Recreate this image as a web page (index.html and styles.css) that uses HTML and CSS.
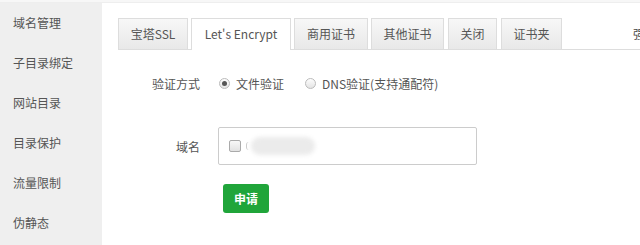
FILE: index.html
```html
<!DOCTYPE html>
<html lang="zh-CN">
<head>
<meta charset="utf-8">
<link rel="stylesheet" href="styles.css">
</head>
<body>
<div class="topstrip"></div>
<div class="page">
  <nav class="sidebar">
    <div class="nav-item">域名管理</div>
    <div class="nav-item">子目录绑定</div>
    <div class="nav-item">网站目录</div>
    <div class="nav-item">目录保护</div>
    <div class="nav-item">流量限制</div>
    <div class="nav-item">伪静态</div>
  </nav>
  <main class="main">
    <div class="tabbar">
      <div class="tab t1">宝塔SSL</div>
      <div class="tab t2 active">Let's Encrypt</div>
      <div class="tab t3">商用证书</div>
      <div class="tab t4">其他证书</div>
      <div class="tab t5">关闭</div>
      <div class="tab t6">证书夹</div>
      <div class="tab-extra">强</div>
    </div>
    <div class="form">
      <div class="row row-verify">
        <div class="label">验证方式</div>
        <label class="radio"><span class="radio-dot checked"></span>文件验证</label>
        <label class="radio"><span class="radio-dot"></span>DNS验证(支持通配符)</label>
      </div>
      <div class="row row-domain">
        <div class="label">域名</div>
        <div class="domain-box">
          <span class="checkbox"></span>
          <span class="paren"></span>
          <span class="blurred"></span>
        </div>
      </div>
      <div class="row row-btn">
        <button class="btn">申请</button>
      </div>
    </div>
  </main>
</div>
</body>
</html>
```

FILE: styles.css
```css
* { box-sizing: border-box; }
html, body { margin: 0; padding: 0; }
body {
  width: 640px;
  height: 245px;
  overflow: hidden;
  background: #fff;
  font-family: "Noto Sans CJK SC", "Noto Sans", sans-serif;
  font-size: 12px;
  color: #555;
}
.topstrip {
  height: 3px;
  background: #f7f7f7;
  border-bottom: 1px solid #eee;
}
.page {
  display: flex;
  height: 242px;
}
.sidebar {
  width: 102px;
  flex: none;
  background: #efefef;
}
.nav-item {
  height: 40px;
  line-height: 40px;
  padding-left: 13px;
  color: #555;
  font-size: 12px;
  white-space: nowrap;
}
.main {
  flex: 1;
  min-width: 0;
  padding: 15px 0 0 16px;
  overflow: hidden;
}
.tabbar {
  display: flex;
  align-items: flex-end;
  border-bottom: 1px solid #ddd;
  height: 32px;
  white-space: nowrap;
}
.tab {
  flex: none;
  height: 31px;
  line-height: 30px;
  margin-right: 3px;
  border: 1px solid #ddd;
  border-bottom: none;
  background: linear-gradient(#f7f7f7, #e8e8e8);
  color: #555;
  font-size: 12px;
  text-align: center;
}
.t1 { width: 70px; }
.t2 { width: 100px; }
.t3 { width: 74px; margin-right: 3px; }
.t4 { width: 73px; margin-right: 4px; }
.t5 { width: 49px; margin-right: 4px; }
.t6 { width: 61px; }
.tab.active {
  background: #fff;
  height: 32px;
  margin-bottom: -1px;
}
.tab-extra {
  flex: none;
  margin-left: 68px;
  align-self: center;
  color: #444;
  font-size: 12px;
}
.form {
  display: flex;
  flex-direction: column;
}
.row {
  display: flex;
  align-items: center;
}
.label {
  width: 82px;
  text-align: right;
  color: #555;
  flex: none;
}
.row-verify {
  margin-top: 18px;
  height: 30px;
}
.radio {
  display: flex;
  align-items: center;
  margin-left: 19px;
  color: #555;
}
.radio + .radio { margin-left: 21px; }
.radio-dot {
  width: 11px;
  height: 11px;
  border-radius: 50%;
  border: 1px solid #bbb;
  background: linear-gradient(#fdfdfd, #e4e4e4);
  margin-right: 6px;
  position: relative;
}
.radio-dot.checked::after {
  content: "";
  position: absolute;
  left: 2px;
  top: 2px;
  width: 5px;
  height: 5px;
  border-radius: 50%;
  background: #555;
}
.row-domain {
  margin-top: 29px;
  height: 38px;
}
.domain-box {
  margin-left: 18px;
  width: 259px;
  height: 38px;
  border: 1px solid #ccc;
  border-radius: 2px;
  display: flex;
  align-items: center;
  padding-left: 10px;
}
.checkbox {
  width: 12px;
  height: 12px;
  border: 1px solid #aaa;
  border-radius: 2px;
  background: linear-gradient(#f8f8f8, #e2e2e2);
  margin-right: 5px;
}
.paren {
  width: 3px;
  height: 8px;
  border-left: 1px solid #ccc;
  border-radius: 3px 0 0 3px;
}
.blurred {
  display: inline-block;
  margin-left: 2px;
  width: 64px;
  height: 18px;
  border-radius: 9px;
  background: #ebebeb;
  filter: blur(2px);
}
.row-btn {
  margin-top: 19px;
  padding-left: 105px;
}
.btn {
  width: 46px;
  height: 29px;
  border: none;
  border-radius: 3px;
  background: #20a53a;
  color: #fff;
  font-family: "Noto Sans CJK SC", sans-serif;
  font-size: 12px;
  font-weight: bold;
  padding: 0;
}
```
